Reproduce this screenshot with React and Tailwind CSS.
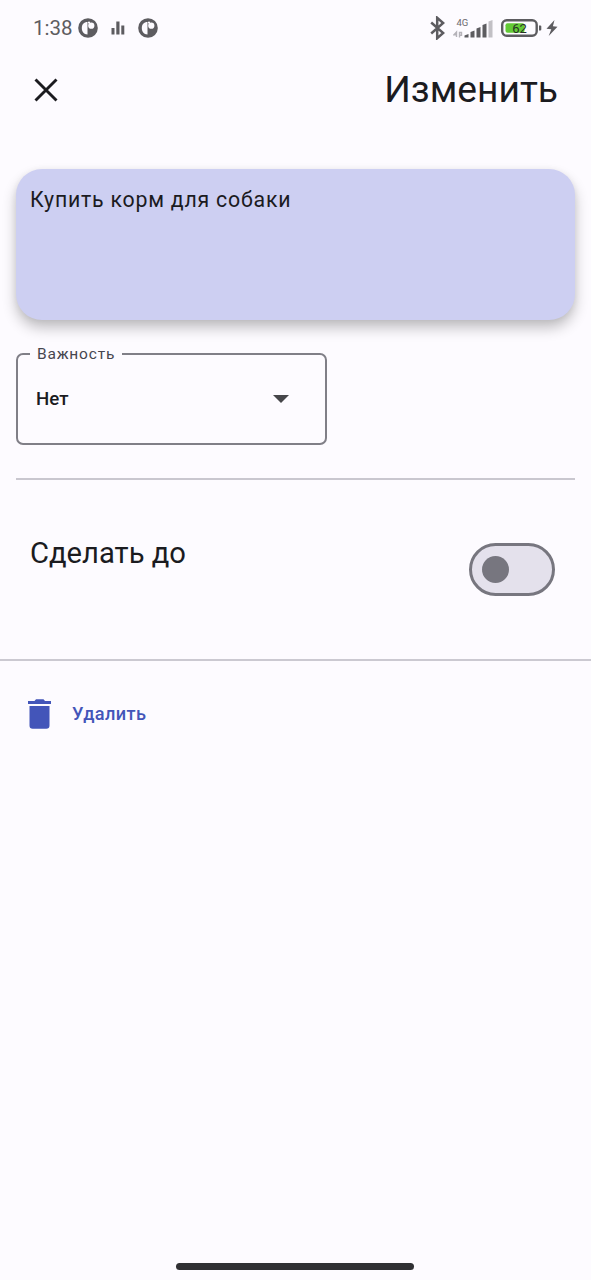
function AppBadge() {
  return (
    <svg className="h-5 w-5" viewBox="0 0 20 20">
      <circle cx="10" cy="10" r="9.8" fill="#5d5c60" />
      <path d="M9.500 4C5.800 4 3.800 6.500 3.800 10s1.800 6.300 5.700 6.500z" fill="#fdfbff" />
      <circle cx="13.300" cy="7.700" r="3.100" fill="#fdfbff" />
      <circle cx="11" cy="4.600" r="1.100" fill="#fdfbff" />
    </svg>
  );
}

function StatusBar() {
  return (
    <div className="flex h-14 items-center pl-[33px] pr-[33px] text-[#5d5c60]">
      <span className="w-[45px] whitespace-nowrap text-[20.500px] leading-6">1:38</span>
      <AppBadge />
      <svg className="ml-[13px] h-4 w-[14px]" viewBox="0 0 14 16" fill="#5d5c60">
        <path d="M.5 8h3v6.500h-3zM5.300 1.500h3.200v13H5.300zM10.300 5.500h3v9h-3z" />
      </svg>
      <div className="ml-[13px]"><AppBadge /></div>
      <svg className="ml-auto h-6 w-4" viewBox="0 0 16 24" fill="none" stroke="#5d5c60" strokeWidth="2.500">
        <path d="M2.200 6.500l12 10.500-6 5.200V1.800l6 5.200-12 10.500" />
      </svg>
      <svg className="ml-2 h-6 w-10" viewBox="0 0 40 24">
        <text x="3.500" y="9.500" fontSize="9.500" fill="#6b6a6e" fontFamily="Roboto, sans-serif">4G</text>
        <path d="M3.500 21v-5l-2.500 2.800h2.500M6.500 21.500v-5h2v2.800H6.500" fill="none" stroke="#b5b3b9" strokeWidth="1.400" />
        <path d="M11.500 19.500l4-1.500v3.500h-4z M17.500 16l4-1.500v7h-4z M23.500 12.500l4-1.500v10.500h-4z M29.500 9l4-1.500v14h-4z" fill="#5d5c60" />
        <path d="M35.500 5.500l4-1.500v17.500h-4z" fill="#c2c0c5" />
      </svg>
      <svg className="ml-2 h-5 w-[41px]" viewBox="0 0 41 20">
        <rect x="1.200" y="2.200" width="34.500" height="15.600" rx="4.500" fill="none" stroke="#5d5c60" strokeWidth="2.400" />
        <rect x="4.500" y="5.300" width="19" height="9.400" rx="2" fill="#62ca35" />
        <path d="M38 7.500h1.300a1 1 0 011 1v3a1 1 0 01-1 1H38z" fill="#5d5c60" />
        <text x="18.500" y="14.700" textAnchor="middle" fontSize="13" fontFamily="Roboto, sans-serif" fill="#263026">62</text>
      </svg>
      <svg className="ml-1 h-4 w-3" viewBox="0 0 12 16" fill="#5d5c60">
        <path d="M8.500 0L.5 8.700l4.800.5L2.700 16l8.800-9.300-4.600-.5z" />
      </svg>
    </div>
  );
}

export default function App() {
  return (
    <div className="flex h-[1280px] w-full flex-col bg-[#fdfbff] font-['Roboto',sans-serif] text-[#1b1b1f]">
      <StatusBar />
      <header className="flex h-[68px] items-center justify-between pl-[33px] pr-[33px]">
        <button aria-label="Закрыть">
          <svg className="h-[26px] w-[26px]" viewBox="0 0 26 26" stroke="#1b1b1f" strokeWidth="2.900">
            <path d="M2.500 2.500l21 21M23.500 2.500l-21 21" />
          </svg>
        </button>
        <h1 className="mb-[2px] whitespace-nowrap text-[37.200px] leading-[44px]">Изменить</h1>
      </header>

      <div className="ml-4 mr-[16.500px] mt-[45px] h-[151px] rounded-[26px] bg-[#cdcff2] px-[14px] pt-[18px] shadow-[0_8px_14px_rgba(0,0,0,0.24),0_1px_6px_rgba(0,0,0,0.06)]">
        <p className="whitespace-nowrap text-[21.300px] leading-[26px] tracking-[0.780px]">Купить корм для собаки</p>
      </div>

      <fieldset className="ml-4 mt-6 h-[101px] w-[311px] rounded-[7px] border-2 border-[#807f87] pl-3">
        <legend className="h-5 whitespace-nowrap px-[7px] text-[15.500px] leading-5 tracking-[0.800px] text-[#46464f]">Важность</legend>
        <div className="flex h-[70px] items-center justify-between pl-[6px] pr-9">
          <span className="text-[18.700px] font-medium leading-6">Нет</span>
          <svg className="h-2 w-4" viewBox="0 0 16 8" fill="#46464a"><path d="M0 0h16L8 8z" /></svg>
        </div>
      </fieldset>

      <hr className="mx-4 mt-[33px] h-[2px] border-0 bg-[#c9c7cf]" />

      <div className="flex h-[179px] items-start justify-between pl-[30px] pr-9">
        <span className="mt-[55px] whitespace-nowrap text-[29.200px] leading-9">Сделать до</span>
        <button role="switch" aria-checked="false" className="mt-[63px] flex h-[53px] w-[86px] items-center rounded-full border-[3px] border-[#77767f] bg-[#e4e1ec] pl-[10px]">
          <span className="h-[27px] w-[27px] rounded-full bg-[#77767f]" />
        </button>
      </div>

      <hr className="h-[2px] border-0 bg-[#cbc9d1]" />

      <button className="ml-7 mt-[37px] flex h-8 items-center self-start text-[#4355b9]">
        <svg className="h-[30px] w-6" viewBox="0 0 24 30" fill="#4355b9">
          <path d="M0 2h6.500L8 .3h7.500L17 2H23v3H0zM1.500 7h20v19.500a3.200 3.200 0 01-3.200 3.200H4.700A3.200 3.200 0 011.500 26.500z" />
        </svg>
        <span className="ml-5 whitespace-nowrap text-[18.200px] font-medium leading-6 tracking-[0.400px]">Удалить</span>
      </button>

      <div className="mb-[10px] ml-44 mt-auto h-[7px] w-[238px] rounded-full bg-[#303033]" />
    </div>
  );
}
